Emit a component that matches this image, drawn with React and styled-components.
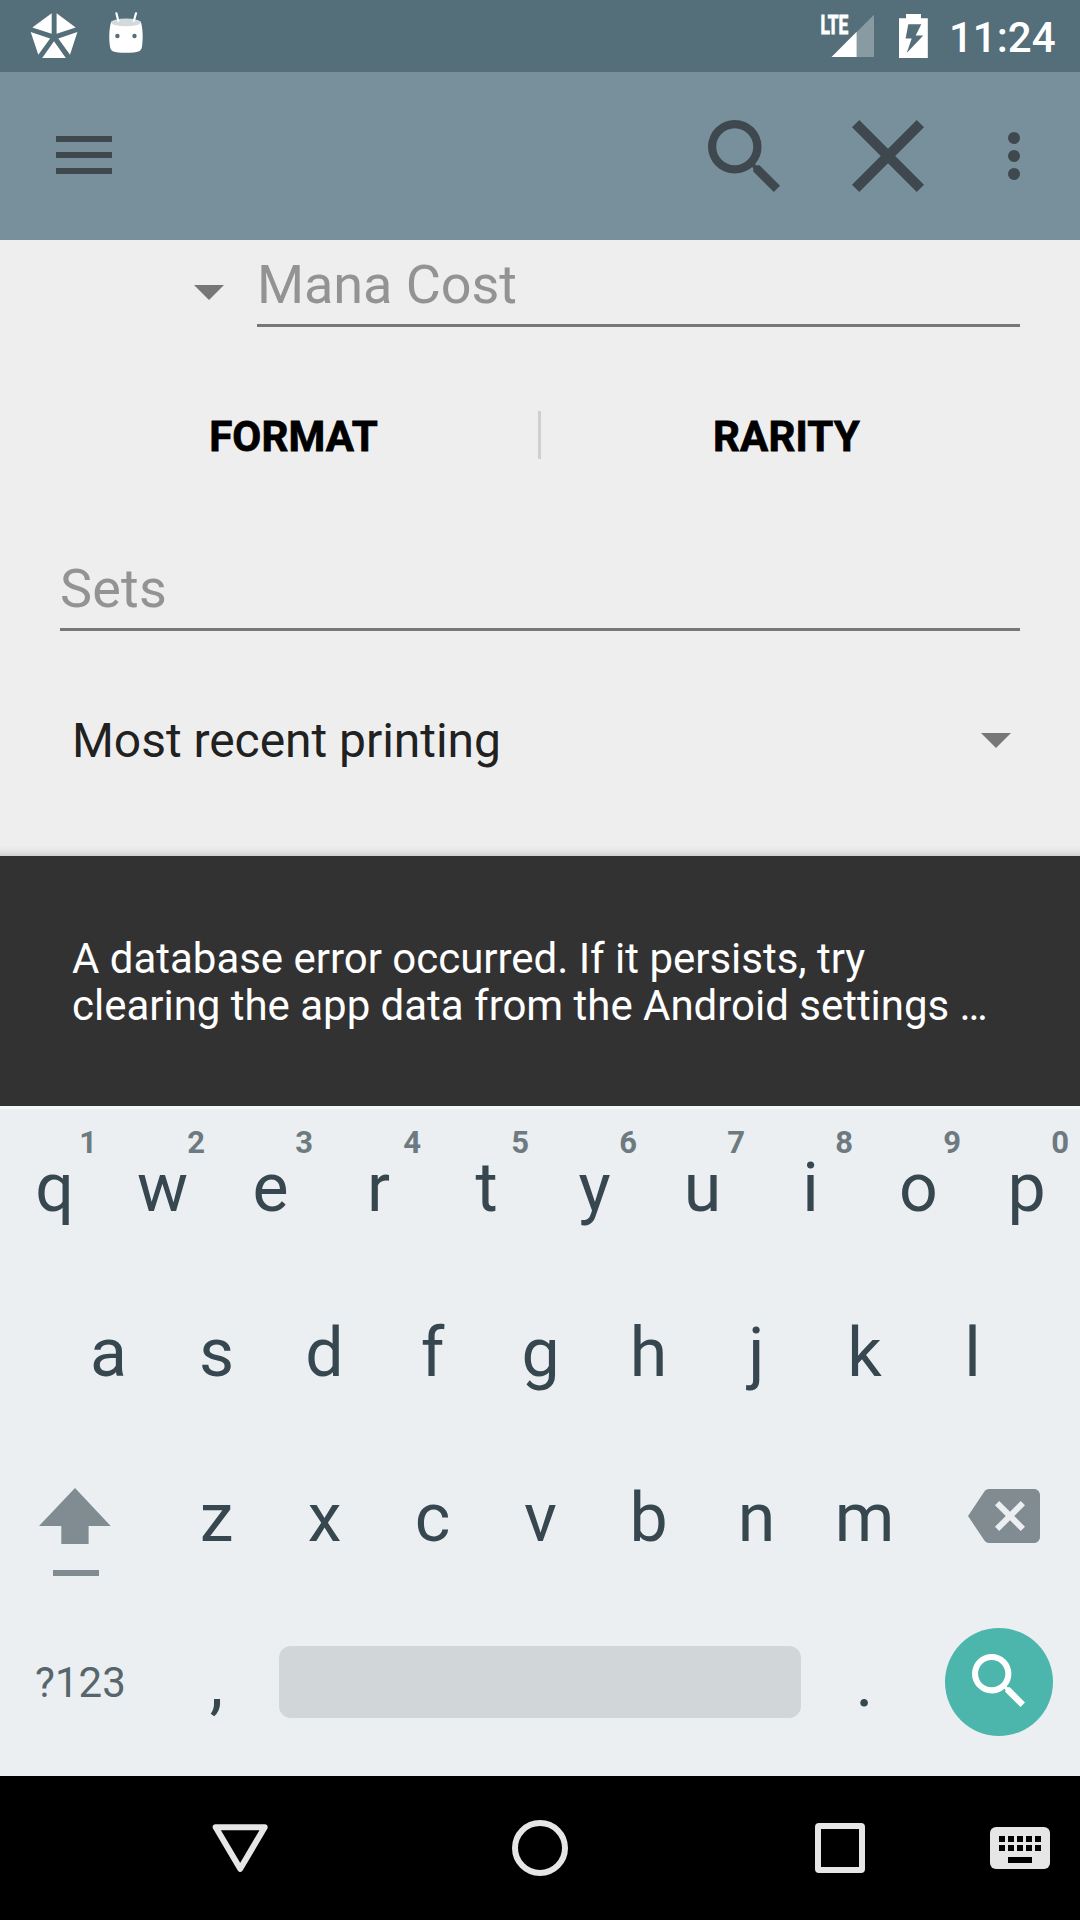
import React from 'react';
import styled, { createGlobalStyle } from 'styled-components';

const GlobalStyle = createGlobalStyle`
  * { box-sizing: border-box; }
  body { margin: 0; background: #eee; }
  svg { display: block; flex: none; }
`;

const Screen = styled.div`
  width: 1080px;
  height: 1920px;
  display: flex;
  flex-direction: column;
  overflow: hidden;
  background: #eee;
  font-family: Roboto, 'Liberation Sans', sans-serif;
`;

/* Status bar */
const StatusBar = styled.header`
  height: 72px;
  flex: none;
  display: flex;
  align-items: flex-start;
  justify-content: space-between;
  padding: 12px 26px 0 30px;
  background: #546e7a;
  color: #fff;
`;
const StatusGroup = styled.div`
  display: flex;
  align-items: flex-start;
`;
const NotificationIcons = styled(StatusGroup)`
  gap: 30px;
`;
const Signal = styled.svg`
  margin-top: -10px;
  overflow: visible;
`;
const Battery = styled.svg`
  margin-left: 23px;
`;
const Clock = styled.span`
  width: 105px;
  margin-left: 21px;
  font-size: 42px;
  font-weight: 500;
  line-height: 51px;
  text-align: right;
  white-space: nowrap;
`;

/* App bar */
const AppBar = styled.div`
  height: 168px;
  flex: none;
  display: flex;
  align-items: center;
  justify-content: space-between;
  padding: 0 60px 0 56px;
  background: #78909c;
  color: #3e484e;
`;
const MenuButton = styled.div`
  margin-top: -2px;
`;
const Actions = styled.div`
  display: flex;
  align-items: center;
`;
const Action = styled.div`
  margin-left: ${(p) => p.$gap || 0}px;
`;

/* Form */
const Form = styled.main`
  position: relative;
  height: 616px;
  flex: none;
  display: flex;
  flex-direction: column;
  background: #eee;
`;
const ManaRow = styled.div`
  display: flex;
  align-items: flex-start;
  padding: 5px 60px 0 194px;
`;
const Caret = styled.svg`
  margin-top: ${(p) => p.$top || 0}px;
`;
const Field = styled.div`
  flex: 1;
  font-size: 54px;
  line-height: 79px;
  color: #939393;
  border-bottom: 3px solid #777;
`;
const ManaField = styled(Field)`
  margin-left: 33px;
  letter-spacing: -0.08px;
`;
const SetsRow = styled.div`
  display: flex;
  margin-top: 90px;
  padding: 0 60px;
  letter-spacing: 0.2px;
`;
const ButtonRow = styled.div`
  display: flex;
  margin-top: 84px;
  padding: 0 49px 0 48px;
  height: 48px;
`;
const FlatButton = styled.div`
  flex: 1;
  padding: 2px 0 0 1px;
  text-align: center;
  font-size: 42px;
  font-weight: 700;
  line-height: 48px;
  letter-spacing: 0.15px;
  color: #000;
  -webkit-text-stroke: 0.8px #000;
`;
const Divider = styled.div`
  width: 3px;
  background: #cfcfcf;
`;
const Spinner = styled.div`
  display: flex;
  justify-content: space-between;
  margin-top: 70px;
  height: 80px;
  padding: 0 69px 0 72px;
  font-size: 48px;
  line-height: 80px;
  letter-spacing: -0.05px;
  color: #212121;
`;
const Shade = styled.div`
  margin-top: auto;
  height: 10px;
  background: linear-gradient(rgba(0, 0, 0, 0), rgba(0, 0, 0, 0.04) 50%, rgba(0, 0, 0, 0.12));
`;

/* Snackbar */
const Snackbar = styled.div`
  height: 250px;
  flex: none;
  padding: 79px 72px 0;
  background: #323232;
  color: #fff;
  font-size: 42px;
  line-height: 47px;
  letter-spacing: -0.02px;
  white-space: nowrap;
`;

/* Keyboard */
const Keyboard = styled.section`
  height: 670px;
  flex: none;
  display: flex;
  flex-direction: column;
  border-top: 3px solid #f5f8f9;
  background: #ebeff2;
  color: #37474f;
`;
const KeyRow = styled.div`
  display: flex;
  height: ${(p) => p.$height || 165}px;
  padding: 0 ${(p) => p.$inset || 0}px;
`;
const Key = styled.div`
  position: relative;
  width: 108px;
  flex: none;
  padding-left: 1px;
  text-align: center;
  font-size: 68px;
  line-height: ${(p) => p.$line || 167}px;
`;
const SymbolsKey = styled(Key)`
  width: 162px;
  padding: 0 1px 0 0;
  font-size: 42px;
  line-height: 165px;
  letter-spacing: 0.1px;
  color: #56666c;
`;
const Hint = styled.span`
  position: absolute;
  top: 18px;
  right: 11px;
  font-size: 31px;
  font-weight: 700;
  line-height: 31px;
  color: #6d7a80;
`;
const ShiftKey = styled.div`
  width: 162px;
  padding: 53px 0 0 39px;
`;
const DeleteKey = styled.div`
  padding: 54px 0 0 50px;
`;
const SpaceKey = styled.div`
  width: 522px;
  height: 72px;
  margin: 46px 9px 0;
  border-radius: 12px;
  background: #d1d6d9;
`;
const EnterKey = styled.div`
  width: 108px;
  height: 108px;
  margin: 28px 0 0 27px;
  padding: 26px 0 0 27px;
  border-radius: 50%;
  background: #4db6ac;
  color: #fff;
`;

/* Navigation bar */
const NavBar = styled.nav`
  height: 144px;
  flex: none;
  display: flex;
  align-items: center;
  padding-left: 132px;
  background: #000;
  color: #e6e6e6;
`;
const NavButton = styled.div`
  width: ${(p) => p.$width}px;
  margin-left: ${(p) => p.$gap || 0}px;
  display: flex;
  justify-content: center;
`;

const SearchIcon = ({ size }) => (
  <svg width={size} height={size} viewBox="3 3 17.49 17.49" fill="currentColor">
    <path d="M15.5 14h-.79l-.28-.27A6.471 6.471 0 0 0 16 9.5 6.5 6.5 0 1 0 9.5 16c1.61 0 3.09-.59 4.23-1.57l.27.28v.79l5 4.99L20.49 19l-4.99-5zm-6 0C7.01 14 5 11.99 5 9.5S7.01 5 9.5 5 14 7.01 14 9.5 11.99 14 9.5 14z" />
  </svg>
);

const DownCaret = ({ top }) => (
  <Caret $top={top} width="30" height="15" viewBox="0 0 30 15">
    <path d="M0 0h30L15 15z" fill="#777" />
  </Caret>
);

const topKeys = ['q', 'w', 'e', 'r', 't', 'y', 'u', 'i', 'o', 'p'];
const homeKeys = ['a', 's', 'd', 'f', 'g', 'h', 'j', 'k', 'l'];
const bottomKeys = ['z', 'x', 'c', 'v', 'b', 'n', 'm'];
const columns = [0, 1, 2, 3, 4];

export default function App() {
  return (
    <Screen>
      <GlobalStyle />
      <StatusBar>
        <NotificationIcons>
          <svg width="48" height="48" viewBox="30 12 48 48" fill="#fff">
            <path d="M51.7 13.2V33.7L32.3 27.4zM56.6 13.2V33.7L75.7 27.4zM30.7 32L50.1 38.4 38.3 54.8zM77.4 32L58.3 38.4 70 54.8zM54 41.2L65.8 58H42.2z" />
          </svg>
          <svg width="36" height="42" viewBox="108 12 36 42">
            <path d="M111.3 21.5C109.3 27 108.6 38 110 46.5C110.8 51.5 113 52.8 126 52.8C139 52.8 141.2 51.5 142 46.5C143.4 38 142.7 27 140.7 21.5z" fill="#fff" />
            <ellipse cx="126" cy="22.4" rx="14.8" ry="3.9" fill="#d3dadd" />
            <path d="M116.4 13.3L118.3 20.8M136 13.3L133.9 20.8" stroke="#fff" strokeWidth="2.2" strokeLinecap="round" />
            <circle cx="117.4" cy="36" r="2.2" fill="#546e7a" />
            <circle cx="134.5" cy="36" r="2.2" fill="#546e7a" />
          </svg>
        </NotificationIcons>
        <StatusGroup>
          <Signal width="60" height="60" viewBox="816 2 60 60">
            <path d="M874 14.7V57H856.7V32z" fill="#889ba3" />
            <path d="M856.7 31.7V57H831.5z" fill="#fff" />
            <text x="820.4" y="33.5" fontSize="26" fontWeight="700" fill="#fff" stroke="#fff" strokeWidth="0.9" textLength="28" lengthAdjust="spacingAndGlyphs">LTE</text>
          </Signal>
          <Battery width="29" height="48" viewBox="899 12 29 48">
            <path fillRule="evenodd" fill="#fff" d="M906 14H921V18.3H927.8V58H899V18.3H906zM908.3 24.3L905.6 38.4H911.7L906.7 53L923.3 35.4H915.7L921.3 24.3z" />
          </Battery>
          <Clock>11:24</Clock>
        </StatusGroup>
      </StatusBar>

      <AppBar>
        <MenuButton>
          <svg width="56" height="38" viewBox="0 0 56 38" fill="currentColor">
            <path d="M0 0h56v6H0zM0 16h56v6H0zM0 32h56v6H0z" />
          </svg>
        </MenuButton>
        <Actions>
          <Action><SearchIcon size={72} /></Action>
          <Action $gap={72}>
            <svg width="72" height="72" viewBox="5 5 14 14" fill="currentColor">
              <path d="M19 6.41L17.59 5 12 10.59 6.41 5 5 6.41 10.59 12 5 17.59 6.41 19 12 13.41 17.59 19 19 17.59 13.41 12z" />
            </svg>
          </Action>
          <Action $gap={84}>
            <svg width="12" height="48" viewBox="0 0 12 48" fill="currentColor">
              <circle cx="6" cy="6" r="6" />
              <circle cx="6" cy="24" r="6" />
              <circle cx="6" cy="42" r="6" />
            </svg>
          </Action>
        </Actions>
      </AppBar>

      <Form>
        <ManaRow>
          <DownCaret top={40} />
          <ManaField>Mana Cost</ManaField>
        </ManaRow>
        <ButtonRow>
          <FlatButton>FORMAT</FlatButton>
          <Divider />
          <FlatButton>RARITY</FlatButton>
        </ButtonRow>
        <SetsRow>
          <Field>Sets</Field>
        </SetsRow>
        <Spinner>
          <span>Most recent printing</span>
          <DownCaret top={32} />
        </Spinner>
        <Shade />
      </Form>

      <Snackbar>
        A database error occurred. If it persists, try
        <br />
        clearing the app data from the Android settings …
      </Snackbar>

      <Keyboard>
        <KeyRow $height={161}>
          {topKeys.map((k, i) => (
            <Key key={k} $line={159}>
              {k}
              <Hint>{(i + 1) % 10}</Hint>
            </Key>
          ))}
        </KeyRow>
        <KeyRow $inset={54}>
          {homeKeys.map((k) => <Key key={k}>{k}</Key>)}
        </KeyRow>
        <KeyRow>
          <ShiftKey>
            <svg width="72" height="88" viewBox="39 1488 72 88" fill="#808c91">
              <path d="M75 1488L110.7 1526H88.6V1544H61.3V1526H39zM53 1570H99V1576H53z" />
            </svg>
          </ShiftKey>
          {bottomKeys.map((k) => <Key key={k}>{k}</Key>)}
          <DeleteKey>
            <svg width="72" height="54" viewBox="0 3 24 18" fill="#808c91">
              <path d="M22 3H7c-.69 0-1.23.35-1.59.88L0 12l5.41 8.11c.36.53.9.89 1.59.89h15c1.1 0 2-.9 2-2V5c0-1.1-.9-2-2-2zm-3 12.59L17.59 17 14 13.41 10.41 17 9 15.59 12.59 12 9 8.41 10.41 7 14 10.59 17.59 7 19 8.41 15.41 12 19 15.59z" />
            </svg>
          </DeleteKey>
        </KeyRow>
        <KeyRow>
          <SymbolsKey>?123</SymbolsKey>
          <Key>,</Key>
          <SpaceKey />
          <Key>.</Key>
          <EnterKey><SearchIcon size={53} /></EnterKey>
        </KeyRow>
      </Keyboard>

      <NavBar>
        <NavButton $width={216}>
          <svg width="56" height="48" viewBox="212 1824 56 48">
            <path d="M215.7 1827.2H264.7L240.2 1868.8z" fill="none" stroke="currentColor" strokeWidth="6" strokeLinejoin="round" />
          </svg>
        </NavButton>
        <NavButton $width={216} $gap={84}>
          <svg width="56" height="56" viewBox="0 0 56 56">
            <circle cx="28" cy="28" r="25" fill="none" stroke="currentColor" strokeWidth="6" />
          </svg>
        </NavButton>
        <NavButton $width={216} $gap={84}>
          <svg width="50" height="50" viewBox="0 0 50 50">
            <path fillRule="evenodd" fill="currentColor" d="M4 0H46A4 4 0 0 1 50 4V46A4 4 0 0 1 46 50H4A4 4 0 0 1 0 46V4A4 4 0 0 1 4 0zM6 6V44H44V6z" />
          </svg>
        </NavButton>
        <NavButton $width={60} $gap={42}>
          <svg width="60" height="42" viewBox="0 0 60 42">
            <rect width="60" height="42" rx="6" fill="currentColor" />
            {columns.map((c) => (
              <path key={c} d={`M${9 + c * 9} 9h6v6h-6zM${9 + c * 9} 18h6v6h-6z`} fill="#000" />
            ))}
            <path d="M18 30h24v6H18z" fill="#000" />
          </svg>
        </NavButton>
      </NavBar>
    </Screen>
  );
}
